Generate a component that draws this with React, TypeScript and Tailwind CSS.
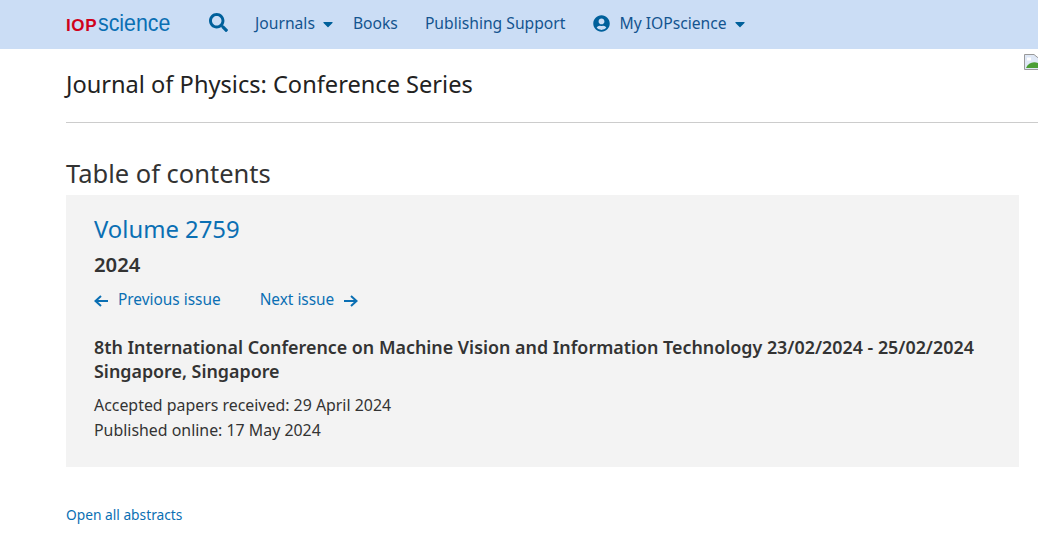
import { FaSearch, FaUserCircle, FaCaretDown } from "react-icons/fa";

const NavLink = ({ label, caret }: { label: string; caret?: boolean }) => (
  <a className="flex items-center text-[15.67px] text-[#13548f] leading-[24px]">
    {label}
    {caret && <FaCaretDown className="ml-[5px] mt-[3px] text-[#00609b]" size={16} />}
  </a>
);

const BrokenImage = () => (
  <svg width="16" height="16" viewBox="0 0 16 16" className="absolute left-[1024px] top-[54px]">
    <path d="M0.5 0.5H10L15.5 5V15.5H0.5Z" fill="#dfe8f6" stroke="#9a9a9a" />
    <path d="M2 14C4 9 9 7 14 9V14Z" fill="#4a9e35" />
    <path d="M3 3.5h4v3h-4z" fill="#fff" />
  </svg>
);

const Arrow = ({ flip }: { flip?: boolean }) => (
  <svg
    width="14"
    height="12"
    viewBox="0 0 14 12"
    fill="none"
    stroke="currentColor"
    strokeWidth="2"
    className={flip ? "mt-[2px] rotate-180" : "mt-[2px]"}
  >
    <path d="M14 6H1.5M7 1L1.5 6L7 11" />
  </svg>
);

export default function App() {
  return (
    <div className="relative h-[551px] w-[1038px] overflow-hidden bg-white font-['Noto_Sans',sans-serif] text-[#333]">
      <header className="flex h-[49px] items-center bg-[#cbddf5] pb-[4px] pl-[66px]">
        <a className="flex w-[143px] items-baseline leading-none">
          <span className="w-[32px] font-['Liberation_Sans',sans-serif] text-[17px] font-bold tracking-[0.6px] text-[#d0021b]">IOP</span>
          <span className="inline-block origin-left scale-x-[0.89] font-['Liberation_Sans',sans-serif] text-[24px] text-[#0a6fb3]">science</span>
        </a>
        <FaSearch className="mr-[27px] text-[#00609b]" size={19} />
        <NavLink label="Journals" caret />
        <div className="w-[17px]" />
        <NavLink label="Books" />
        <div className="w-[27px]" />
        <NavLink label="Publishing Support" />
        <div className="w-[28px]" />
        <FaUserCircle className="mr-[9px] mt-[1px] text-[#00609b]" size={17} />
        <NavLink label="My IOPscience" caret />
      </header>

      <BrokenImage />

      <main className="box-content w-[1019px] pl-[66px]">
        <div className="h-[74px] border-b border-[#ccc] pt-[17px]">
          <h1 className="text-[23.6px] leading-[36px] text-[#222]">Journal of Physics: Conference Series</h1>
        </div>
        <h2 className="mt-[32px] text-[25.5px] leading-[36px] text-[#333]">Table of contents</h2>
        <section className="mt-[4px] h-[272px] w-[953px] bg-[#f3f3f3] px-[28px] pt-[17px]">
          <h3 className="text-[23.85px] leading-[34px] text-[#0a6fb3]">Volume 2759</h3>
          <p className="mt-[3px] text-[20.3px] font-semibold leading-[30px] text-[#333]">2024</p>
          <div className="mt-[9px] flex items-center text-[15.4px] leading-[24px] text-[#0a6fb3]">
            <Arrow />
            <a className="ml-[10px]">Previous issue</a>
            <a className="ml-[39px]">Next issue</a>
            <span className="ml-[10px] flex">
              <Arrow flip />
            </span>
          </div>
          <p className="mt-[23px] text-[17.88px] font-semibold leading-[24px] text-[#333]">
            8th International Conference on Machine Vision and Information Technology 23/02/2024 - 25/02/2024
            <br />
            Singapore, Singapore
          </p>
          <p className="mt-[10px] text-[15.9px] leading-[25px] text-[#333]">Accepted papers received: 29 April 2024</p>
          <p className="text-[15.9px] leading-[25px] text-[#333]">Published online: 17 May 2024</p>
        </section>
        <a className="mt-[38px] block text-[13.75px] leading-[20px] text-[#0a6fb3]">Open all abstracts</a>
      </main>
    </div>
  );
}
